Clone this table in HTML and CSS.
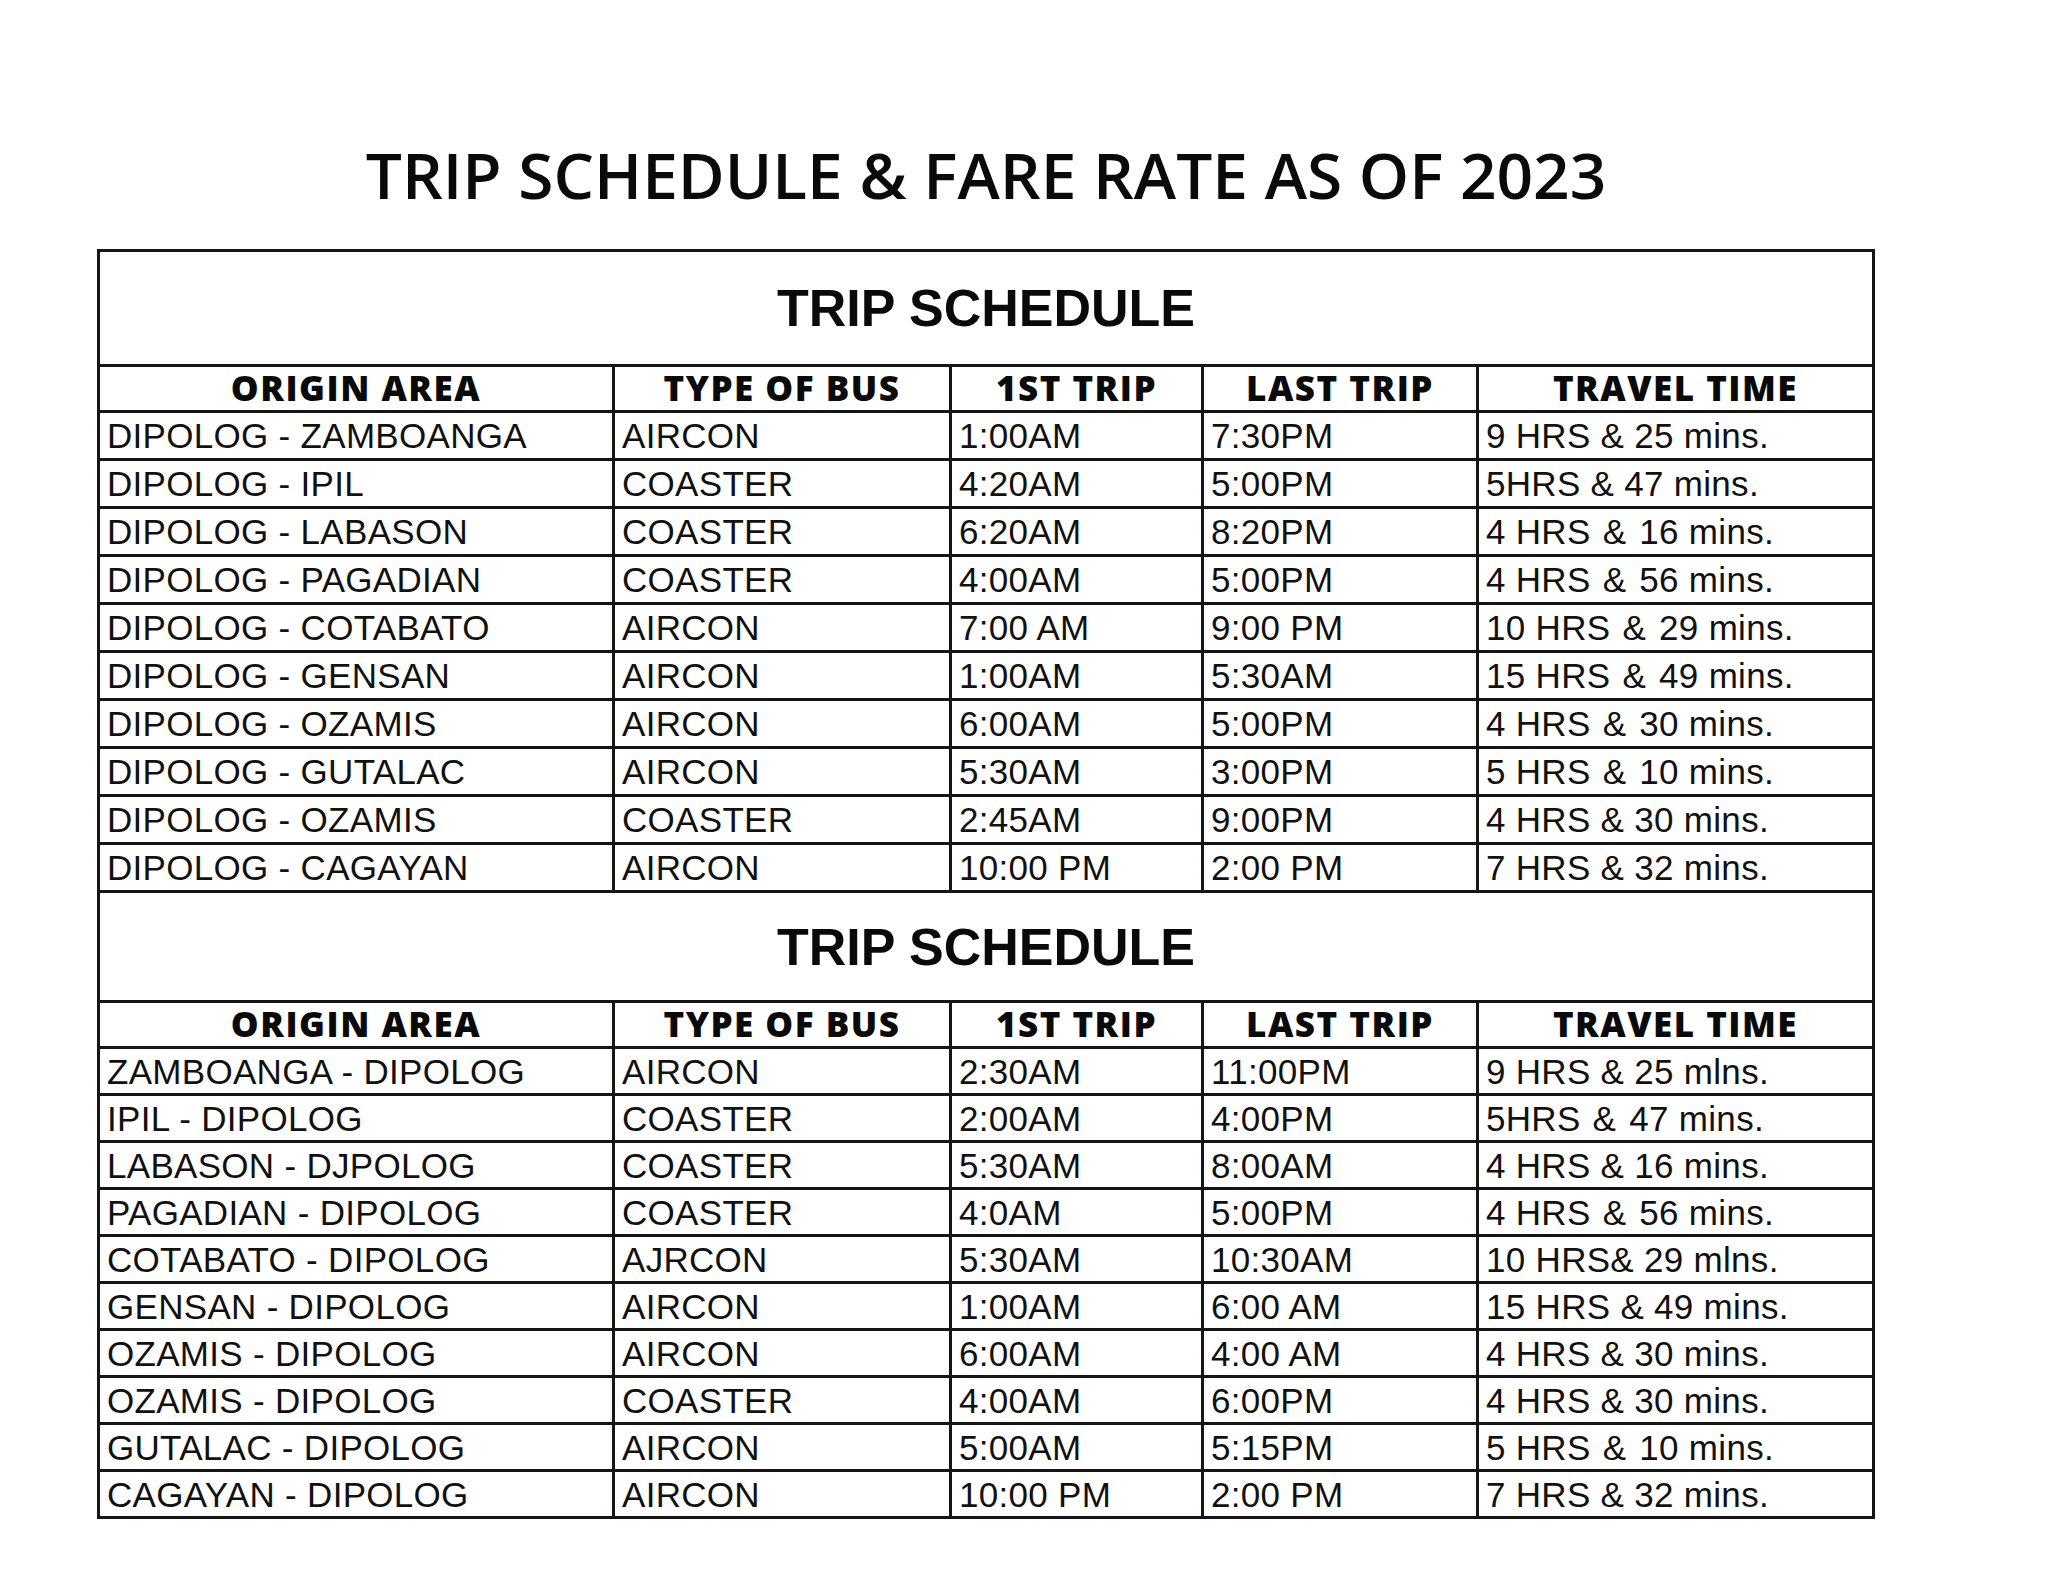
FILE: index.html
```html
<!DOCTYPE html>
<html lang="en">
<head>
<meta charset="utf-8">
<title>Trip Schedule &amp; Fare Rate as of 2023</title>
<link rel="stylesheet" href="styles.css">
</head>
<body>
<main class="page">
  <h1 class="doc-title">TRIP SCHEDULE &amp; FARE RATE AS OF 2023</h1>
  <table class="schedule">
    <colgroup>
      <col class="c-origin">
      <col class="c-type">
      <col class="c-first">
      <col class="c-last">
      <col class="c-time">
    </colgroup>
    <tbody>
      <tr class="section-row"><th colspan="5" class="section-title">TRIP SCHEDULE</th></tr>
      <tr class="head-row"><th>ORIGIN AREA</th><th>TYPE OF BUS</th><th>1ST TRIP</th><th>LAST TRIP</th><th>TRAVEL TIME</th></tr>
      <tr class="data-row"><td>DIPOLOG - ZAMBOANGA</td><td>AIRCON</td><td>1:00AM</td><td>7:30PM</td><td>9 HRS &amp; 25 mins.</td></tr>
      <tr class="data-row"><td>DIPOLOG - IPIL</td><td>COASTER</td><td>4:20AM</td><td>5:00PM</td><td>5HRS &amp; 47 mins.</td></tr>
      <tr class="data-row"><td>DIPOLOG - LABASON</td><td>COASTER</td><td>6:20AM</td><td>8:20PM</td><td>4 HRS <span class="amp">&amp;</span> 16 mins.</td></tr>
      <tr class="data-row"><td>DIPOLOG - PAGADIAN</td><td>COASTER</td><td>4:00AM</td><td>5:00PM</td><td>4 HRS <span class="amp">&amp;</span> 56 mins.</td></tr>
      <tr class="data-row"><td>DIPOLOG - COTABATO</td><td>AIRCON</td><td>7:00 AM</td><td>9:00 PM</td><td>10 HRS <span class="amp">&amp;</span> 29 mins.</td></tr>
      <tr class="data-row"><td>DIPOLOG - GENSAN</td><td>AIRCON</td><td>1:00AM</td><td>5:30AM</td><td>15 HRS <span class="amp">&amp;</span> 49 mins.</td></tr>
      <tr class="data-row"><td>DIPOLOG - OZAMIS</td><td>AIRCON</td><td>6:00AM</td><td>5:00PM</td><td>4 HRS <span class="amp">&amp;</span> 30 mins.</td></tr>
      <tr class="data-row"><td>DIPOLOG - GUTALAC</td><td>AIRCON</td><td>5:30AM</td><td>3:00PM</td><td>5 HRS <span class="amp">&amp;</span> 10 mins.</td></tr>
      <tr class="data-row"><td>DIPOLOG - OZAMIS</td><td>COASTER</td><td>2:45AM</td><td>9:00PM</td><td>4 HRS &amp; 30 mins.</td></tr>
      <tr class="data-row"><td>DIPOLOG - CAGAYAN</td><td>AIRCON</td><td>10:00 PM</td><td>2:00 PM</td><td>7 HRS &amp; 32 mins.</td></tr>

      <tr class="section-row section-row--second"><th colspan="5" class="section-title">TRIP SCHEDULE</th></tr>
      <tr class="head-row"><th>ORIGIN AREA</th><th>TYPE OF BUS</th><th>1ST TRIP</th><th>LAST TRIP</th><th>TRAVEL TIME</th></tr>
      <tr class="data-row data-row--tight"><td>ZAMBOANGA - DIPOLOG</td><td>AIRCON</td><td>2:30AM</td><td>11:00PM</td><td>9 HRS &amp; 25 mlns.</td></tr>
      <tr class="data-row data-row--tight"><td>IPIL - DIPOLOG</td><td>COASTER</td><td>2:00AM</td><td>4:00PM</td><td>5HRS <span class="amp">&amp;</span> 47 mins.</td></tr>
      <tr class="data-row data-row--tight"><td>LABASON - DJPOLOG</td><td>COASTER</td><td>5:30AM</td><td>8:00AM</td><td>4 HRS &amp; 16 mins.</td></tr>
      <tr class="data-row data-row--tight"><td>PAGADIAN - DIPOLOG</td><td>COASTER</td><td>4:0AM</td><td>5:00PM</td><td>4 HRS <span class="amp">&amp;</span> 56 mins.</td></tr>
      <tr class="data-row data-row--tight"><td>COTABATO - DIPOLOG</td><td>AJRCON</td><td>5:30AM</td><td>10:30AM</td><td>10 HRS&amp; 29 mlns.</td></tr>
      <tr class="data-row data-row--tight"><td>GENSAN - DIPOLOG</td><td>AIRCON</td><td>1:00AM</td><td>6:00 AM</td><td>15 HRS &amp; 49 mins.</td></tr>
      <tr class="data-row data-row--tight"><td>OZAMIS - DIPOLOG</td><td>AIRCON</td><td>6:00AM</td><td>4:00 AM</td><td>4 HRS &amp; 30 mins.</td></tr>
      <tr class="data-row data-row--tight"><td>OZAMIS - DIPOLOG</td><td>COASTER</td><td>4:00AM</td><td>6:00PM</td><td>4 HRS &amp; 30 mins.</td></tr>
      <tr class="data-row data-row--tight"><td>GUTALAC - DIPOLOG</td><td>AIRCON</td><td>5:00AM</td><td>5:15PM</td><td>5 HRS <span class="amp">&amp;</span> 10 mins.</td></tr>
      <tr class="data-row data-row--tight"><td>CAGAYAN - DIPOLOG</td><td>AIRCON</td><td>10:00 PM</td><td>2:00 PM</td><td>7 HRS &amp; 32 mins.</td></tr>
    </tbody>
  </table>
</main>
</body>
</html>
```

FILE: styles.css
```css
html, body {
  margin: 0;
  padding: 0;
  background: #ffffff;
  color: #0d0d0d;
}

.page {
  width: 1778px;
  padding: 135px 0 60px 97px;
}

.doc-title {
  margin: 0 0 34px;
  height: 80px;
  font-family: "Open Sans", "Noto Sans", sans-serif;
  font-weight: 600;
  font-size: 64px;
  line-height: 80px;
  text-align: center;
  color: #0a0a0a;
  white-space: nowrap;
}

.schedule {
  width: 1778px;
  table-layout: fixed;
  border-collapse: collapse;
  border: 3px solid #161616;
}

.c-origin { width: 515px; }
.c-type { width: 337px; }
.c-first { width: 252px; }
.c-last { width: 275px; }
.c-time { width: 396px; }

.schedule th,
.schedule td {
  border: 3px solid #161616;
  padding: 0;
  white-space: nowrap;
}

.section-row { height: 115px; }
.section-row--second { height: 110px; }

.section-title {
  font-family: "Liberation Sans", Arial, sans-serif;
  font-weight: 700;
  font-size: 52px;
  text-align: center;
  vertical-align: middle;
  color: #0a0a0a;
}

.head-row { height: 46px; }

.head-row th {
  font-family: "Open Sans", "Noto Sans", sans-serif;
  font-weight: 800;
  font-size: 35px;
  line-height: 38px;
  letter-spacing: 1.5px;
  padding-bottom: 2px;
  text-align: center;
  vertical-align: middle;
  color: #0a0a0a;
}

.data-row { height: 48px; }
.data-row--tight { height: 47px; }

.data-row td {
  font-family: "Liberation Sans", Arial, sans-serif;
  font-weight: 400;
  font-size: 35px;
  line-height: 38px;
  letter-spacing: 0.3px;
  padding: 1px 0 0 7px;
  text-align: left;
  vertical-align: middle;
  color: #111111;
}

.amp {
  margin: 0 3px 0 2px;
}
```
